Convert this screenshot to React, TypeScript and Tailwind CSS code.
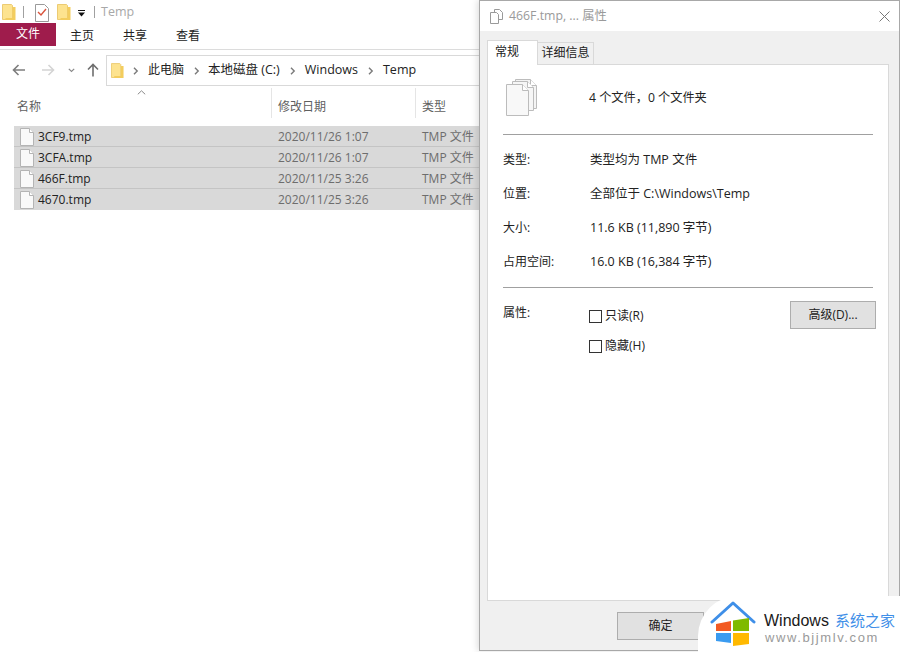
import React from 'react';

const FONT = '"Open Sans", "Noto Sans CJK SC", sans-serif';

const files = [
  { name: '3CF9.tmp', date: '2020/11/26 1:07' },
  { name: '3CFA.tmp', date: '2020/11/26 1:07' },
  { name: '466F.tmp', date: '2020/11/25 3:26' },
  { name: '4670.tmp', date: '2020/11/25 3:26' },
];

const infoRows = [
  { label: '类型:', value: '类型均为 TMP 文件' },
  { label: '位置:', value: '全部位于 C:\\Windows\\Temp' },
  { label: '大小:', value: '11.6 KB (11,890 字节)' },
  { label: '占用空间:', value: '16.0 KB (16,384 字节)' },
];

function Folder({ className }: { className?: string }) {
  return (
    <svg viewBox="0 0 14 17" className={className}>
      <path d="M.5.5h9l1 1v14H.5z" fill="#fde38f" stroke="#eccb73" />
      <path d="M10.5 3h3v13h-10v-2h7z" fill="#f3cd5e" />
    </svg>
  );
}

function FileIcon() {
  return (
    <svg width="14" height="18" viewBox="0 0 14 18" className="shrink-0">
      <path d="M.5.5h9l4 4v13H.5z" fill="#f9f9f9" stroke="#b4b4b4" />
      <path d="M9.5.5v4h4" fill="#fff" stroke="#b4b4b4" />
    </svg>
  );
}

function Chevron() {
  return (
    <svg width="6" height="8" viewBox="0 0 6 8" className="shrink-0">
      <path d="M1 .8 4.2 4 1 7.2" fill="none" stroke="#7a7a7a" strokeWidth="1.4" />
    </svg>
  );
}

function Explorer() {
  return (
    <div className="w-[479px] shrink-0 h-full bg-white overflow-hidden">
      {/* quick access bar */}
      <div className="h-[23px] flex items-center text-[12.5px] leading-[16px] text-[#a8a8a8]">
        <Folder className="w-[14px] h-[17px] ml-[2px] mt-[1px]" />
        <div className="w-px h-[12px] bg-[#a0a0a0] ml-[7px]" />
        <svg width="14" height="18" viewBox="0 0 14 18" className="ml-[11px] mt-[2px]">
          <path d="M.5.5h9l4 4v13H.5z" fill="#fff" stroke="#9a9a9a" />
          <path d="M3 8l3 3 5-6" fill="none" stroke="#d9533c" strokeWidth="1.4" />
        </svg>
        <Folder className="w-[14px] h-[17px] ml-[8px] mt-[1px]" />
        <svg width="7" height="7" viewBox="0 0 7 7" className="ml-[7px] mt-[3px]">
          <path d="M0 0h7v1H0zM0 2.5h7L3.5 6.5z" fill="#111" />
        </svg>
        <div className="w-px h-[12px] bg-[#a0a0a0] ml-[9px]" />
        <span className="ml-[6px]">Temp</span>
      </div>
      {/* ribbon tabs */}
      <div className="h-[27px] flex items-center border-b border-[#dcdcdc] text-[12px] leading-[16px] text-[#222]">
        <div className="w-[56px] h-[23px] -mt-[4px] bg-[#9f1c4c] text-white flex items-center justify-center">文件</div>
        <div className="ml-[14px] w-[24px] -mt-[1px]">主页</div>
        <div className="ml-[29px] w-[24px] -mt-[1px]">共享</div>
        <div className="ml-[29px] w-[24px] -mt-[1px]">查看</div>
      </div>
      {/* nav + address */}
      <div className="h-[38px] flex items-start">
        <div className="flex items-center h-[30px] mt-[5px] w-[106px] shrink-0">
          <svg width="14" height="12" viewBox="0 0 14 12" className="ml-[12px]">
            <path d="M13 6H2M6.5 1 1.5 6l5 5" fill="none" stroke="#7d7d7d" strokeWidth="1.6" />
          </svg>
          <svg width="14" height="12" viewBox="0 0 14 12" className="ml-[15px]">
            <path d="M1 6h11M7.5 1l5 5-5 5" fill="none" stroke="#d4d4d4" strokeWidth="1.6" />
          </svg>
          <svg width="7" height="5" viewBox="0 0 7 5" className="ml-[13px]">
            <path d="M.8.8 3.5 3.5 6.2.8" fill="none" stroke="#8a8a8a" strokeWidth="1.2" />
          </svg>
          <svg width="12" height="14" viewBox="0 0 12 14" className="ml-[12px]">
            <path d="M6 13.5V2M1 6.5 6 1.5l5 5" fill="none" stroke="#6e6e6e" strokeWidth="1.6" />
          </svg>
        </div>
        <div className="flex-1 h-[31px] mt-[5px] border-y border-l border-[#d9d9d9] flex items-center text-[12px] leading-[16px] text-[#222] whitespace-nowrap">
          <Folder className="w-[13px] h-[16px] ml-[4px] shrink-0" />
          <span className="ml-[9px] flex"><Chevron /></span>
          <span className="ml-[9px] -mt-[1px]">此电脑</span>
          <span className="ml-[10px] flex"><Chevron /></span>
          <span className="ml-[8px] -mt-[1px] text-[12.5px]">本地磁盘 (C:)</span>
          <span className="ml-[10px] flex"><Chevron /></span>
          <span className="ml-[9px] -mt-[1px] text-[12.5px]">Windows</span>
          <span className="ml-[10px] flex"><Chevron /></span>
          <span className="ml-[9px] -mt-[1px] text-[12.5px]">Temp</span>
        </div>
      </div>
      {/* column headers */}
      <div className="relative h-[38px] flex text-[12px] leading-[16px] text-[#5f5f5f]">
        <svg width="9" height="5" viewBox="0 0 9 5" className="absolute left-[137px] top-[2px]">
          <path d="M.8 4.3 4.5.8l3.7 3.5" fill="none" stroke="#8a8a8a" />
        </svg>
        <div className="w-[272px] pl-[17px] pt-[11px] border-r border-[#e5e5e5] h-[30px]">名称</div>
        <div className="w-[144px] pl-[6px] pt-[11px] border-r border-[#e5e5e5] h-[30px]">修改日期</div>
        <div className="pl-[6px] pt-[11px]">类型</div>
      </div>
      {/* file rows */}
      <div className="ml-[14px] flex flex-col gap-px bg-[#c4c4c4]">
        {files.map((f) => (
          <div key={f.name} className="h-[20px] last:h-[21px] pt-[1px] last:pb-[1px] bg-[#d9d9d9] flex items-center text-[12px] leading-[16px] whitespace-nowrap">
            <div className="w-[258px] flex items-center pl-[6px] gap-[4px] text-[#222]">
              <FileIcon />
              <span>{f.name}</span>
            </div>
            <div className="w-[144px] pl-[6px] text-[#6d6d6d]">{f.date}</div>
            <div className="pl-[6px] text-[#6d6d6d]">TMP 文件</div>
          </div>
        ))}
      </div>
    </div>
  );
}

function PropertiesDialog() {
  return (
    <div className="flex-1 h-[651px] flex flex-col border border-[#a8a8a8] bg-[#f0f0f0] text-[12px] leading-[16px] text-[#222] shadow-[-2px_0_6px_rgba(0,0,0,0.12)]">
      {/* title bar */}
      <div className="h-[30px] shrink-0 bg-white flex items-center pl-[10px] pr-[9px]">
        <svg width="13" height="15" viewBox="0 0 13 15">
          <path d="M4.5.5h5l3 3v7h-8z" fill="#fff" stroke="#9a9a9a" />
          <path d="M.5 3.5h6l2 2v9h-8z" fill="#fff" stroke="#9a9a9a" />
        </svg>
        <span className="ml-[6px] -mt-[1px] text-[12.3px] text-[#9a9a9a]">466F.tmp, ... 属性</span>
        <svg width="11" height="11" viewBox="0 0 11 11" className="ml-auto">
          <path d="M.5.5l10 10M10.5.5l-10 10" stroke="#777" />
        </svg>
      </div>
      {/* tabs */}
      <div className="h-[33px] shrink-0 flex items-end pl-[7px] pr-[10px]">
        <div className="w-[51px] h-[25px] bg-white border-x border-t border-[#d9d9d9] pl-[7px] pt-[3px] -mb-px z-10">常规</div>
        <div className="w-[56px] h-[22px] bg-[#f0f0f0] border-r border-t border-[#d9d9d9] text-center leading-[20px]">详细信息</div>
      </div>
      {/* general panel */}
      <div className="flex-1 ml-[7px] mr-[10px] bg-white border border-[#d9d9d9] px-[15px]">
        <div className="h-[69px] flex items-center">
          <svg width="32" height="37" viewBox="0 0 32 37" className="shrink-0 -mt-[5px] ml-[3px]">
            <path d="M9.5.5h15l6 6v23h-21z" fill="#f4f4f4" stroke="#bcbcbc" />
            <path d="M24.5.5v6h6" fill="#fff" stroke="#bcbcbc" />
            <path d="M6.5 2.5h15l6 6v23h-21z" fill="#f6f6f6" stroke="#bcbcbc" />
            <path d="M21.5 2.5v6h6" fill="#fff" stroke="#bcbcbc" />
            <path d="M.5 5.5h16l6 6v25H.5z" fill="#f8f8f8" stroke="#bcbcbc" />
            <path d="M16.5 5.5v6h6" fill="#fff" stroke="#bcbcbc" />
          </svg>
          <span className="ml-[51px] -mt-[4px] text-[12.2px]">4 个文件，0 个文件夹</span>
        </div>
        <div className="h-px bg-[#a0a0a0]" />
        <div className="pt-[8px]">
          {infoRows.map((r) => (
            <div key={r.label} className="h-[34px] flex items-center">
              <span className="w-[87px]">{r.label}</span>
              <span className="text-[12.5px]">{r.value}</span>
            </div>
          ))}
        </div>
        <div className="h-px bg-[#a0a0a0] mt-[8px]" />
        <div className="flex pt-[13px]">
          <span className="w-[87px] shrink-0 pt-[4px]">属性:</span>
          <div className="flex flex-col gap-[16px] pt-[8px] -ml-px">
            <label className="flex items-center gap-[3px] h-[14px]">
              <span className="w-[13px] h-[13px] border border-[#333] bg-white" />
              只读(R)
            </label>
            <label className="flex items-center gap-[3px] h-[14px]">
              <span className="w-[13px] h-[13px] border border-[#333] bg-white" />
              隐藏(H)
            </label>
          </div>
          <button className="ml-auto -mr-[3px] w-[86px] h-[28px] bg-[#e1e1e1] border border-[#adadad]">高级(D)...</button>
        </div>
      </div>
      {/* footer */}
      <div className="h-[49px] shrink-0 flex items-start pl-[137px] pt-[11px]">
        <button className="w-[87px] h-[28px] bg-[#e1e1e1] border border-[#adadad]">确定</button>
      </div>
    </div>
  );
}

function Watermark() {
  return (
    <div className="absolute right-0 bottom-0 w-[202px] h-[56px] bg-white rounded-tl-[40px] flex items-start pl-[12px] pt-[5px]">
      <svg width="46" height="46" viewBox="0 0 46 46" className="shrink-0">
        <path d="M2 21 23 2l21 19" fill="none" stroke="#3f8fe8" strokeWidth="3" strokeLinecap="round" strokeLinejoin="round" />
        <path d="M6 23l15-3v10H6z" fill="#f25a22" />
        <path d="M23 19.5l16-2.5v13H23z" fill="#7fba00" />
        <path d="M6 32h15v10L6 40z" fill="#3a9bf0" />
        <path d="M23 32h16v11l-16 2z" fill="#ffb900" />
      </svg>
      <div className="ml-[8px] mt-[9px] whitespace-nowrap">
        <div className="flex items-baseline text-[16px] leading-[20px] text-[#1a1a1a]" style={{ fontFamily: '"Liberation Sans", sans-serif' }}>
          Windows
          <span className="ml-[6px] text-[15px] text-[#3f8fe8]" style={{ fontFamily: '"Noto Sans CJK SC", sans-serif' }}>系统之家</span>
        </div>
        <div className="ml-[1px] text-[13px] leading-[14px] tracking-[1.6px] text-[#9a9a9a]" style={{ fontFamily: '"Liberation Sans", sans-serif' }}>
          www.bjjmlv.com
        </div>
      </div>
    </div>
  );
}

export default function App() {
  return (
    <div className="relative w-[900px] h-[652px] overflow-hidden bg-white flex" style={{ fontFamily: FONT }}>
      <Explorer />
      <PropertiesDialog />
      <Watermark />
    </div>
  );
}
